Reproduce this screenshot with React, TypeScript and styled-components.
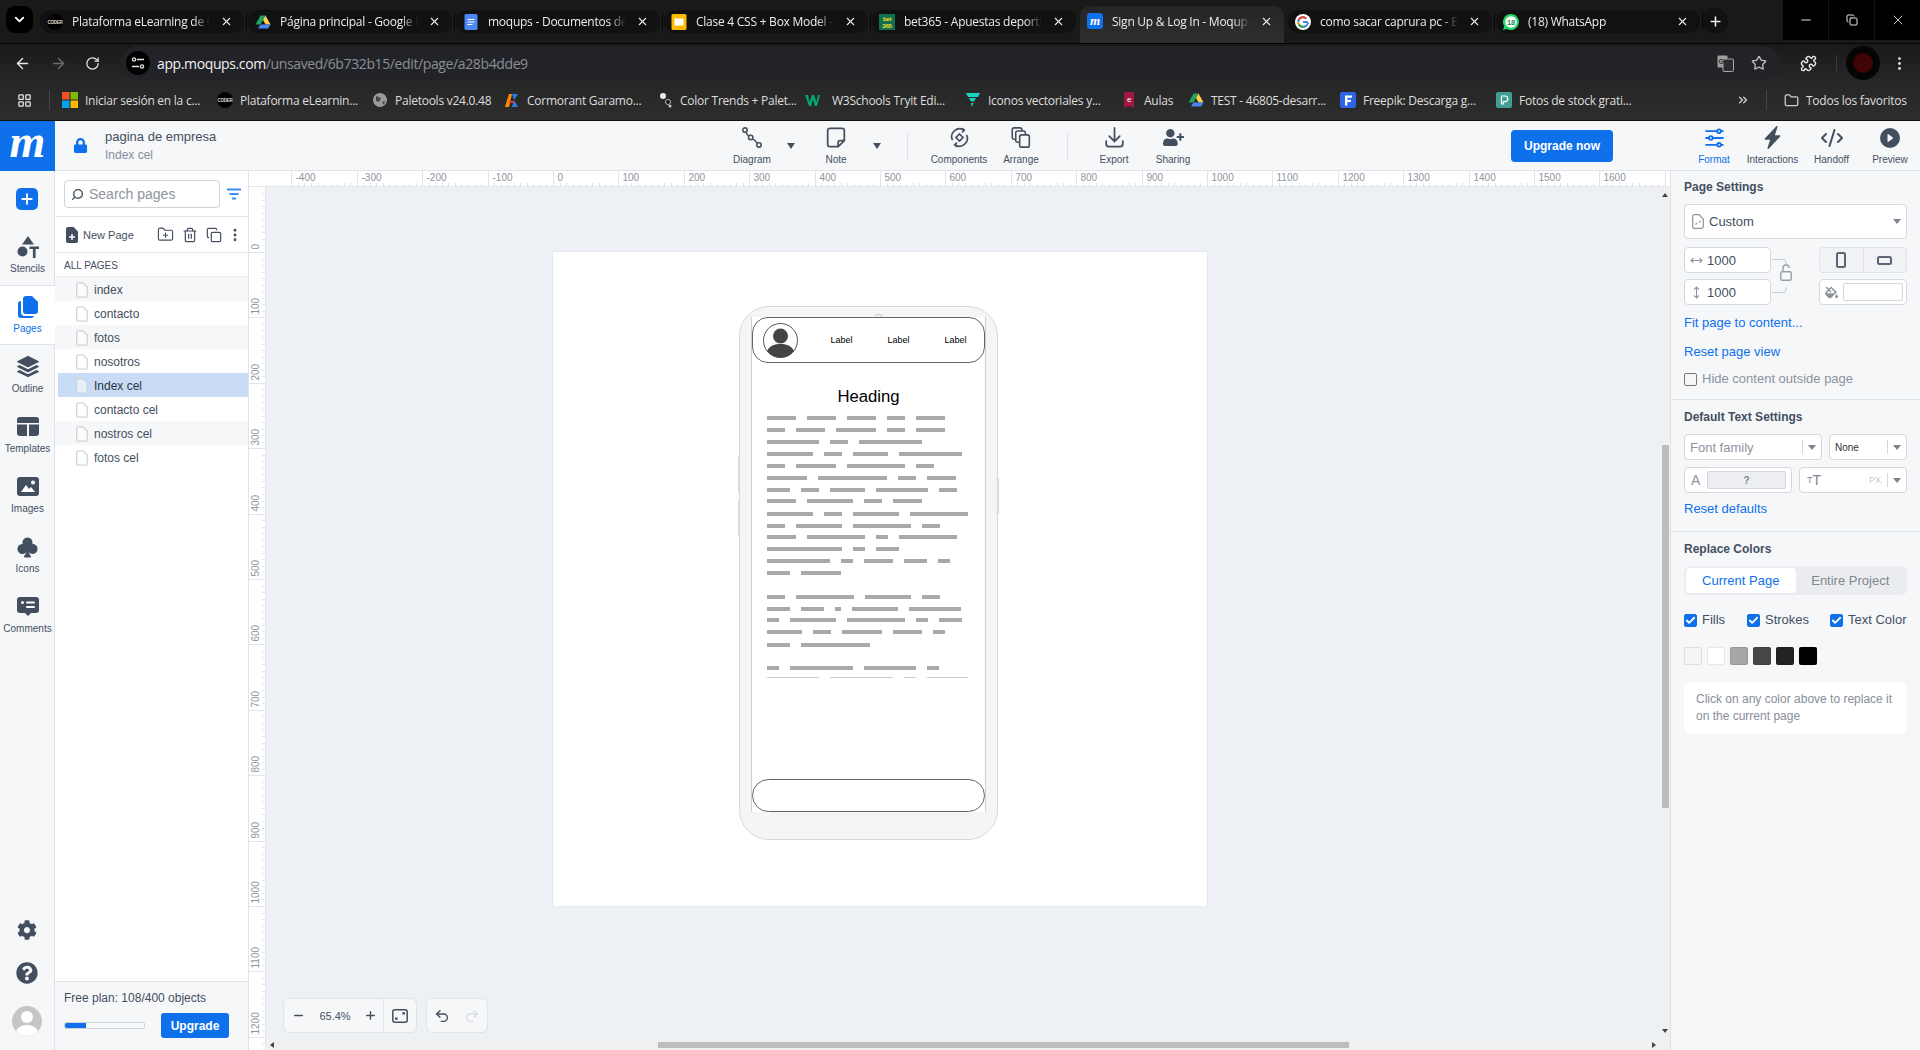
import React from 'react'
import styled, { createGlobalStyle } from 'styled-components'
import { FolderPlus, Trash2, Copy, EllipsisVertical, Minus, Plus, Undo2, Redo2, Search, ArrowLeft, ArrowRight, RotateCw, Star, Puzzle, LayoutGrid, Folder, ChevronDown, ChevronsRight, MoveHorizontal, MoveVertical, Check, X, CodeXml } from 'lucide-react'
import { FaLock, FaCog, FaQuestionCircle, FaUserPlus, FaFillDrip } from 'react-icons/fa'
import { BsStack, BsSuitClubFill, BsLightningChargeFill, BsPlayCircleFill } from 'react-icons/bs'

const BLUE = '#0e71eb'
const SLATE = '#434f5f'
const UI_FONT = '"Liberation Sans", Arial, sans-serif'
const CHROME_FONT = '"Open Sans", "Noto Sans", sans-serif'

const GlobalStyle = createGlobalStyle`
	html, body { margin: 0; padding: 0; height: 100%; overflow: hidden; }
	body { font-family: ${UI_FONT}; background: #fff; }
	* { box-sizing: border-box; }
`

const Page = styled.div`
	width: 1920px;
	height: 1050px;
	display: flex;
	flex-direction: column;
	overflow: hidden;
`

/* ---- browser chrome ---- */
const TabStrip = styled.div`
	height: 44px;
	background: #191919;
	border-bottom: 1px solid #050505;
	display: flex;
	align-items: flex-start;
	color: #ececec;
	font-family: ${CHROME_FONT};
`
const TabMenu = styled.div`
	width: 27px;
	height: 27px;
	margin: 6px 7px 0 6px;
	border-radius: 9px;
	background: #000;
	display: flex;
	align-items: center;
	justify-content: center;
	color: #fff;
`
const Tabs = styled.div`
	display: flex;
	gap: 4px;
`
const Tab = styled.div<{ $active?: boolean; $sep?: boolean }>`
	position: relative;
	width: 204px;
	height: ${(p) => (p.$active ? 37 : 23)}px;
	margin-top: ${(p) => (p.$active ? 6 : 10)}px;
	padding: ${(p) => (p.$active ? '0 0 7px 7px' : '0 0 0 7px')};
	border-radius: ${(p) => (p.$active ? '10px 10px 0 0' : '11px')};
	background: ${(p) => (p.$active ? 'linear-gradient(#252525, #2f2f2f)' : '#111')};
	display: flex;
	align-items: center;
	font-size: 12px;
	letter-spacing: -0.25px;
	&::after {
		content: '';
		display: ${(p) => (p.$sep ? 'block' : 'none')};
		position: absolute;
		right: -3px;
		top: 2px;
		width: 1px;
		height: 18px;
		background: #050505;
	}
`
const Favicon = styled.svg`
	width: 16px;
	height: 16px;
	flex: none;
	display: block;
`
const TabTitle = styled.span`
	width: 138px;
	margin: 0 8px 0 9px;
	white-space: nowrap;
	overflow: hidden;
	-webkit-mask-image: linear-gradient(90deg, #000 88%, transparent);
	mask-image: linear-gradient(90deg, #000 88%, transparent);
`
const TabClose = styled.span`
	width: 16px;
	display: flex;
	justify-content: center;
`
const NewTab = styled.div`
	width: 26px;
	height: 26px;
	margin: 8px 0 0 2px;
	border-radius: 50%;
	background: #111;
	display: flex;
	align-items: center;
	justify-content: center;
`
const WindowButtons = styled.div`
	margin-left: auto;
	width: 137px;
	height: 40px;
	background: #000;
	display: flex;
`
const WindowButton = styled.div<{ $line?: boolean }>`
	flex: 1;
	display: flex;
	align-items: center;
	justify-content: center;
	color: #e4e4e4;
	border-left: ${(p) => (p.$line ? '1px solid #141414' : '0')};
`
const NavBar = styled.div`
	height: 36px;
	background: linear-gradient(#191919, #262626);
	padding: 2px 0 0 0;
	display: flex;
	align-items: center;
`
const NavIcon = styled.div<{ $w: number; $dim?: boolean; $ml?: number }>`
	width: ${(p) => p.$w}px;
	margin-left: ${(p) => p.$ml ?? 0}px;
	flex: none;
	display: flex;
	justify-content: center;
	color: ${(p) => (p.$dim ? '#6d6d6d' : '#e6e6e6')};
`
const AddressBar = styled.div`
	width: 1659px;
	height: 34px;
	margin-left: 9px;
	border-radius: 17px;
	background: #212328;
	display: flex;
	align-items: center;
	padding-left: 5px;
	font: 14px ${CHROME_FONT};
	letter-spacing: -0.38px;
	color: #8c8f94;
`
const SiteBadge = styled.div`
	width: 24px;
	height: 24px;
	border-radius: 50%;
	background: #000;
	margin-right: 7px;
	display: flex;
	align-items: center;
	justify-content: center;
`
const Host = styled.span`
	color: #f2f2f2;
`
const AddressTools = styled.div`
	margin-left: auto;
	display: flex;
	gap: 17px;
	padding-right: 13px;
	color: #bdbdbd;
	align-items: center;
`
const NavDivider = styled.div`
	width: 1px;
	height: 16px;
	background: #3a3a3a;
	margin-left: 8px;
`
const ProfileDot = styled.div`
	width: 34px;
	height: 34px;
	border-radius: 50%;
	background: #050505;
	display: flex;
	align-items: center;
	justify-content: center;
	margin-left: 9px;
	&::after {
		content: '';
		width: 20px;
		height: 20px;
		border-radius: 50%;
		background: #3f0404;
	}
`
const BookmarkBar = styled.div`
	height: 41px;
	background: linear-gradient(#262626, #2d2d2d);
	border-bottom: 1px solid #111;
	display: flex;
	align-items: center;
	color: #dedede;
	font: 12px ${CHROME_FONT};
	letter-spacing: -0.25px;
`
const BarDivider = styled.div<{ $ml?: number }>`
	width: 1px;
	height: 20px;
	margin-left: ${(p) => p.$ml ?? 0}px;
	background: #454545;
	flex: none;
`
const BookmarkStart = styled.div`
	width: 12px;
	flex: none;
`
const Bookmark = styled.div<{ $ml?: number; $gap?: number }>`
	display: flex;
	align-items: center;
	gap: ${(p) => p.$gap ?? 7}px;
	flex: none;
	margin-left: ${(p) => p.$ml ?? 0}px;
	white-space: nowrap;
	overflow: hidden;
`
const BookmarkIcon = styled.svg`
	width: 16px;
	height: 16px;
	flex: none;
`

/* ---- moqups top bar ---- */
const AppBar = styled.div`
	height: 50px;
	flex: none;
	background: #f6f7f9;
	border-bottom: 1px solid #dfe2e8;
	display: flex;
	align-items: center;
	color: ${SLATE};
`
const Logo = styled.div`
	width: 55px;
	height: 50px;
	background: ${BLUE};
	display: flex;
	align-items: center;
	justify-content: center;
	color: #fff;
	font: italic 700 46px/46px "Liberation Serif", serif;
	padding-bottom: 8px;
`
const LockSlot = styled.div`
	width: 50px;
	display: flex;
	justify-content: center;
	color: ${BLUE};
`
const Project = styled.div`
	width: 617px;
	font-size: 13px;
	line-height: 19px;
`
const ProjectSub = styled.div`
	font-size: 12px;
	color: #868e99;
`
const Tool = styled.div<{ $w: number; $ml?: number }>`
	width: ${(p) => p.$w}px;
	margin-left: ${(p) => p.$ml ?? 0}px;
	height: 50px;
	flex: none;
	display: flex;
	flex-direction: column;
	align-items: center;
	padding-top: 4px;
	font-size: 10px;
	color: ${SLATE};
	white-space: nowrap;
`
const ToolLabel = styled.span<{ $blue?: boolean }>`
	margin-top: 3px;
	line-height: 12px;
	color: ${(p) => (p.$blue ? BLUE : 'inherit')};
`
const ToolIcon = styled.div`
	height: 26px;
	display: flex;
	align-items: center;
	justify-content: center;
`
const Caret = styled.div<{ $w: number; $mr?: number }>`
	width: ${(p) => p.$w}px;
	margin-right: ${(p) => p.$mr ?? 0}px;
	flex: none;
	display: flex;
	justify-content: center;
	&::after {
		content: '';
		border: 4px solid transparent;
		border-top: 6px solid ${SLATE};
		border-bottom: 0;
	}
`
const ToolDivider = styled.div<{ $mx: number }>`
	width: 1px;
	height: 28px;
	flex: none;
	margin: 0 ${(p) => p.$mx}px;
	background: #dfe2e8;
`
const UpgradeNow = styled.button`
	width: 102px;
	height: 32px;
	margin-left: 309px;
	flex: none;
	border: 0;
	border-radius: 4px;
	background: ${BLUE};
	color: #fff;
	font: 700 12px ${UI_FONT};
`

/* ---- workspace ---- */
const Workspace = styled.div`
	flex: 1;
	min-height: 0;
	display: flex;
`
const Rail = styled.div`
	width: 55px;
	flex: none;
	background: #f6f7f9;
	border-right: 1px solid #dfe2e8;
	display: flex;
	flex-direction: column;
	align-items: stretch;
	padding-top: 17px;
`
const AddButton = styled.div`
	width: 22px;
	height: 22px;
	margin: 0 0 15px 16px;
	border-radius: 5px;
	background: ${BLUE};
	display: flex;
	align-items: center;
	justify-content: center;
	color: #fff;
`
const RailItem = styled.div<{ $active?: boolean }>`
	height: 60px;
	width: 55px;
	flex: none;
	display: flex;
	flex-direction: column;
	align-items: center;
	padding-top: 10px;
	font-size: 10px;
	color: ${(p) => (p.$active ? BLUE : SLATE)};
	background: ${(p) => (p.$active ? '#fff' : 'transparent')};
	box-shadow: ${(p) => (p.$active ? 'inset 0 1px #dfe2e8, inset 0 -1px #dfe2e8' : 'none')};
`
const RailIcon = styled.div`
	height: 24px;
	display: flex;
	align-items: center;
	justify-content: center;
	margin-bottom: 4px;
`
const RailBottom = styled.div`
	margin-top: auto;
	display: flex;
	flex-direction: column;
	align-items: center;
	color: ${SLATE};
	padding-bottom: 14px;
	gap: 22px;
`
const Avatar = styled.div`
	width: 30px;
	height: 30px;
	border-radius: 50%;
	background: #c6c6c6;
	overflow: hidden;
`

const PagesPanel = styled.div`
	width: 194px;
	flex: none;
	display: flex;
	flex-direction: column;
	background: #fff;
	border-right: 1px solid #dfe2e8;
	color: ${SLATE};
`
const SearchRow = styled.div`
	height: 46px;
	flex: none;
	padding: 9px 0 0 9px;
	border-bottom: 1px solid #e4e6ea;
	display: flex;
	align-items: flex-start;
`
const SearchBox = styled.div`
	width: 156px;
	height: 28px;
	border: 1px solid #ced2d8;
	border-radius: 4px;
	display: flex;
	align-items: center;
	gap: 5px;
	padding-left: 6px;
	font-size: 14px;
	color: #8d949e;
	svg {
		color: ${SLATE};
		transform: scaleX(-1);
	}
`
const FilterIcon = styled.svg`
	width: 14px;
	height: 12px;
	margin: 8px 0 0 7px;
`
const ActionRow = styled.div`
	height: 36px;
	flex: none;
	padding-left: 11px;
	border-bottom: 1px solid #e4e6ea;
	display: flex;
	align-items: center;
	gap: 5px;
	font-size: 11px;
`
const ActionIcons = styled.div`
	margin-left: 18px;
	display: flex;
	gap: 8px;
	align-items: center;
	svg:last-child {
		margin-left: -3px;
	}
`
const AllPages = styled.div`
	height: 24px;
	flex: none;
	padding: 1px 0 0 9px;
	display: flex;
	align-items: center;
	font-size: 10px;
	border-bottom: 1px solid #eceef1;
`
const PageRow = styled.div<{ $selected?: boolean; $odd?: boolean }>`
	height: 24px;
	flex: none;
	display: flex;
	align-items: center;
	gap: 6px;
	font-size: 12px;
	padding-top: 1px;
	margin-left: ${(p) => (p.$selected ? 3 : 0)}px;
	padding-left: ${(p) => (p.$selected ? 18 : 21)}px;
	background: ${(p) => (p.$selected ? '#c9dcf5' : p.$odd ? '#f6f7f9' : '#fff')};
	color: ${(p) => (p.$selected ? '#2a3340' : SLATE)};
`
const PlanBox = styled.div`
	margin-top: auto;
	height: 69px;
	flex: none;
	background: #f6f7f9;
	border-top: 1px solid #dfe2e8;
	padding: 9px 0 0 9px;
	font-size: 12px;
`
const PlanRow = styled.div`
	display: flex;
	align-items: center;
	margin-top: 8px;
`
const PlanTrack = styled.div`
	width: 81px;
	height: 7px;
	border: 1px solid #cfd3d9;
	border-radius: 2px;
	background: #f6f7f9;
`
const PlanFill = styled.div`
	height: 100%;
	background: ${BLUE};
	border-radius: 2px 0 0 2px;
`
const UpgradeSmall = styled.button`
	width: 68px;
	height: 25px;
	margin-left: 16px;
	border: 0;
	border-radius: 3px;
	background: ${BLUE};
	color: #fff;
	font: 700 12px ${UI_FONT};
`

const CanvasArea = styled.div`
	flex: 1;
	min-width: 0;
	display: grid;
	grid-template-columns: 17px 1fr 10px;
	grid-template-rows: 16px 1fr 10px;
	background: #f0f0f0;
`
const RulerCorner = styled.div`
	background: #fff;
	border-bottom: 1px solid #e4e6ea;
`
const RulerSvg = styled.svg`
	display: block;
	background: #fff;
	font: 10px ${UI_FONT};
`
const TopRuler = styled.div`
	grid-column: 2 / 4;
	overflow: hidden;
`
const SideRuler = styled.div`
	grid-row: 2 / 4;
	overflow: hidden;
`
const Stage = styled.div`
	position: relative;
	overflow: hidden;
	background: #edf0f5;
	padding: 65px 0 0 287px;
`
const Artboard = styled.div`
	position: relative;
	width: 654px;
	height: 654px;
	background: #fff;
	box-shadow: 0 0 0 1px #e6e8ec;
`
const ScrollV = styled.div`
	background: #f0f0f0;
	display: flex;
	flex-direction: column;
	align-items: center;
	padding: 6px 0 7px;
`
const ThumbV = styled.div`
	width: 7px;
	height: 363px;
	margin-top: 248px;
	background: #bdbdbd;
`
const ArrowV = styled.div<{ $down?: boolean }>`
	flex: none;
	margin-top: ${(p) => (p.$down ? 'auto' : 0)};
	border: 3px solid transparent;
	border-bottom: ${(p) => (p.$down ? '0' : '4px solid #444')};
	border-top: ${(p) => (p.$down ? '4px solid #444' : '0')};
`
const ScrollH = styled.div`
	background: #f0f0f0;
	grid-column: 2 / 4;
	display: flex;
	align-items: center;
	padding: 0 14px 0 4px;
`
const ThumbH = styled.div`
	width: 691px;
	height: 6px;
	margin-left: 384px;
	background: #bdbdbd;
`
const ArrowH = styled.div<{ $right?: boolean }>`
	flex: none;
	margin-left: ${(p) => (p.$right ? 'auto' : 0)};
	border: 3px solid transparent;
	border-right: ${(p) => (p.$right ? '0' : '4px solid #444')};
	border-left: ${(p) => (p.$right ? '4px solid #444' : '0')};
`
const ZoomDock = styled.div`
	position: absolute;
	left: 17px;
	bottom: 7px;
	display: flex;
	gap: 9px;
`
const DockBox = styled.div`
	height: 35px;
	background: #f6f7f9;
	border: 1px solid #e0e3e8;
	border-radius: 6px;
	display: flex;
	align-items: center;
	color: ${SLATE};
	font-size: 11px;
`
const DockSlot = styled.div<{ $w: number; $line?: boolean; $dim?: boolean }>`
	width: ${(p) => p.$w}px;
	height: 100%;
	display: flex;
	align-items: center;
	justify-content: center;
	border-left: ${(p) => (p.$line ? '1px solid #e0e3e8' : '0')};
	color: ${(p) => (p.$dim ? '#d9dde2' : 'inherit')};
`

/* ---- phone wireframe on the artboard ---- */
const Phone = styled.div`
	position: absolute;
	left: 186px;
	top: 54px;
	width: 259px;
	height: 534px;
	padding: 10px 11px 27px 11px;
	background: #f5f5f5;
	border: 1px solid #d8d8d8;
	border-radius: 30px;
	display: flex;
`
const PhoneButton = styled.div<{ $side: 'left' | 'right'; $top: number; $h: number }>`
	position: absolute;
	${(p) => p.$side}: -2px;
	top: ${(p) => p.$top}px;
	width: 1px;
	height: ${(p) => p.$h}px;
	background: #dcdcdc;
`
const Notch = styled.div`
	position: absolute;
	left: 135px;
	top: 7px;
	width: 7px;
	height: 3px;
	border: 1px solid #ccc;
	border-bottom: 0;
	border-radius: 4px 4px 0 0;
`
const Screen = styled.div`
	flex: 1;
	min-width: 0;
	background: #fff;
	border-left: 1px solid #cfcfcf;
	border-right: 1px solid #cfcfcf;
	display: flex;
	flex-direction: column;
	color: #000;
`
const PhoneNav = styled.div`
	height: 46px;
	flex: none;
	border: 1px solid #666;
	border-radius: 16px;
	display: flex;
	align-items: center;
	padding-left: 10px;
	font: 9px "Liberation Sans", sans-serif;
`
const PhoneAvatar = styled.svg`
	width: 35px;
	height: 35px;
	margin-right: 15px;
`
const NavLabel = styled.span`
	width: 57px;
	text-align: center;
`
const Heading = styled.div`
	margin-top: 23px;
	text-align: center;
	font: 16.7px/22px "Liberation Sans", sans-serif;
`
const Lorem = styled.div`
	margin-top: 8px;
	padding-left: 15px;
`
const LoremRow = styled.div<{ $thin?: boolean }>`
	display: flex;
	height: ${(p) => (p.$thin ? 1 : 4)}px;
	gap: 11px;
	opacity: ${(p) => (p.$thin ? 0.6 : 1)};
`
const LoremWord = styled.div`
	height: 100%;
	background: #a9a9a9;
`
const PhoneFooter = styled.div`
	margin-top: auto;
	height: 33px;
	flex: none;
	border: 1px solid #666;
	border-radius: 17px;
	background: #fff;
`

/* ---- right panel ---- */
const RightPanel = styled.div`
	width: 250px;
	flex: none;
	background: #f6f7f9;
	border-left: 1px solid #dfe2e8;
	color: ${SLATE};
	font-size: 13px;
`
const Section = styled.div<{ $h?: number; $pt: number }>`
	height: ${(p) => (p.$h ? `${p.$h}px` : 'auto')};
	padding: ${(p) => p.$pt}px 13px 0 13px;
	border-bottom: ${(p) => (p.$h ? '1px solid #dfe2e8' : '0')};
	display: flex;
	flex-direction: column;
`
const SectionTitle = styled.div`
	font-weight: 700;
	font-size: 12px;
	line-height: 16px;
	margin-bottom: 9px;
`
const Field = styled.div<{ $w?: number; $h?: number; $muted?: boolean; $tight?: boolean }>`
	width: ${(p) => (p.$w ? `${p.$w}px` : '100%')};
	height: ${(p) => p.$h ?? 26}px;
	flex: none;
	background: #fff;
	border: 1px solid #d5d8de;
	border-radius: 4px;
	display: flex;
	align-items: center;
	padding: ${(p) => (p.$tight ? '0 3px 0 5px' : '0 5px')};
	color: ${(p) => (p.$muted ? '#8d949e' : SLATE)};
`
const InnerField = styled.div<{ $w: number; $grey?: boolean }>`
	width: ${(p) => p.$w}px;
	height: 18px;
	margin-left: auto;
	background: ${(p) => (p.$grey ? '#eceef1' : '#fff')};
	border: 1px solid #d5d8de;
	border-radius: 2px;
	display: flex;
	align-items: center;
	justify-content: center;
	font-size: 10px;
	font-weight: 700;
	color: #7d8490;
`
const FieldRow = styled.div<{ $mt?: number }>`
	display: flex;
	margin-top: ${(p) => p.$mt ?? 7}px;
	justify-content: space-between;
`
const FieldStack = styled.div`
	display: flex;
	flex-direction: column;
	gap: 6px;
`
const SizeValue = styled.span`
	margin-left: 4px;
`
const Linker = styled.svg`
	width: 47px;
	height: 58px;
	flex: none;
`
const Segments = styled.div`
	width: 88px;
	height: 26px;
	background: #f1f2f5;
	border: 1px solid #e0e3e8;
	border-radius: 4px;
	display: flex;
`
const Segment = styled.div<{ $line?: boolean }>`
	flex: 1;
	display: flex;
	align-items: center;
	justify-content: center;
	border-left: ${(p) => (p.$line ? '1px solid #e0e3e8' : '0')};
`
const Orient = styled.div<{ $w: number; $h: number }>`
	width: ${(p) => p.$w}px;
	height: ${(p) => p.$h}px;
	border: 2px solid #5a6675;
	border-radius: 2.5px;
`
const CustomIcon = styled.svg`
	width: 12px;
	height: 15px;
	margin: 0 5px 0 2px;
	flex: none;
`
const Swatch = styled.div<{ $color: string }>`
	width: 18px;
	height: 18px;
	border-radius: 2px;
	border: 1px solid rgba(0, 0, 0, 0.09);
	background: ${(p) => p.$color};
`
const Swatches = styled.div`
	display: flex;
	gap: 5px;
	margin-top: 19px;
`
const TextLink = styled.div<{ $mt: number }>`
	color: ${BLUE};
	margin-top: ${(p) => p.$mt}px;
	line-height: 16px;
`
const CheckLine = styled.label`
	display: flex;
	align-items: center;
	gap: 5px;
	margin-top: 11px;
	color: #8c929c;
	line-height: 16px;
`
const Box = styled.span<{ $on?: boolean }>`
	width: 13px;
	height: 13px;
	flex: none;
	border-radius: 2px;
	border: 1px solid ${(p) => (p.$on ? BLUE : '#777')};
	background: ${(p) => (p.$on ? BLUE : 'transparent')};
	color: #fff;
	display: flex;
	align-items: center;
	justify-content: center;
`
const Dropper = styled.span<{ $sep?: boolean }>`
	margin-left: auto;
	height: 14px;
	display: flex;
	align-items: center;
	gap: 6px;
	color: #8b919b;
	&::after {
		content: '';
		margin-left: ${(p) => (p.$sep ? 5 : 0)}px;
		border: 4px solid transparent;
		border-top: 5px solid #7d8490;
		border-bottom: 0;
	}
`
const DropLine = styled.i`
	width: 1px;
	height: 14px;
	background: #d5d8de;
	margin-right: -6px;
`
const UnitPx = styled.span`
	font-size: 9px;
	color: #c4c8ce;
`
const NoneText = styled.span`
	font-size: 10px;
	color: #333;
`
const ColorA = styled.span`
	margin-left: 1px;
	font-size: 14px;
	color: #8d949e;
`
const SizeSmall = styled.span`
	margin-left: 2px;
	font-size: 9px;
	color: #7d8490;
`
const SizeBig = styled.span`
	font-size: 14px;
	color: #7d8490;
`
const SwitchTabs = styled.div`
	height: 29px;
	background: #ebecf0;
	border-radius: 6px;
	padding: 2px;
	display: flex;
`
const SwitchTab = styled.div<{ $on?: boolean }>`
	flex: 1;
	padding-bottom: 1px;
	border-radius: 4px;
	display: flex;
	align-items: center;
	justify-content: center;
	background: ${(p) => (p.$on ? '#fff' : 'transparent')};
	color: ${(p) => (p.$on ? BLUE : '#7f8691')};
`
const ChecksRow = styled.div`
	display: flex;
	margin-top: 17px;
	line-height: 16px;
`
const CheckItem = styled.div<{ $w: number }>`
	width: ${(p) => p.$w}px;
	display: flex;
	align-items: center;
	gap: 5px;
	white-space: nowrap;
`
const InfoBox = styled.div`
	margin-top: 17px;
	height: 52px;
	background: #fff;
	border-radius: 8px;
	padding: 9px 12px 0;
	font-size: 12px;
	line-height: 17px;
	color: #868e99;
`

/* ---- drawings ---- */
const DocIcon = () => (
	<svg width="12" height="16" viewBox="0 0 12 16" fill="none" stroke="#cfd3d9" strokeWidth="1.3">
		<path d="M2 .8h5l4.2 4.2v8.6a1.6 1.6 0 0 1-1.6 1.6H2A1.4 1.4 0 0 1 .7 13.6V2.2A1.4 1.4 0 0 1 2 .8z" fill="#fff" fillOpacity="0.55" />
	</svg>
)
const StencilsIcon = () => (
	<svg width="24" height="24" viewBox="0 0 24 24" fill={SLATE}>
		<path d="M12 1l6 8.5H6z" />
		<circle cx="6.5" cy="16.5" r="5" />
		<path d="M13.5 11.5h9.5v2.5h-3.4v9h-2.7v-9h-3.4z" />
	</svg>
)
const PagesIcon = () => (
	<svg width="22" height="24" viewBox="0 0 22 24" fill={BLUE}>
		<path d="M9 1h6l6 6v9a3 3 0 0 1-3 3H9a3 3 0 0 1-3-3V4a3 3 0 0 1 3-3z" />
		<path d="M4 6v11a4 4 0 0 0 4 4h9a3 3 0 0 1-3 2H4a3 3 0 0 1-3-3V9a3 3 0 0 1 3-3z" />
	</svg>
)
const TemplatesIcon = () => (
	<svg width="22" height="20" viewBox="0 0 22 20" fill={SLATE}>
		<path d="M3 0h16a3 3 0 0 1 3 3v3H0V3a3 3 0 0 1 3-3z" />
		<path d="M0 7.5h10V19H3a3 3 0 0 1-3-3z" />
		<path d="M12 7.5h10V16a3 3 0 0 1-3 3h-7z" />
	</svg>
)
const ImagesIcon = () => (
	<svg width="22" height="20" viewBox="0 0 22 20">
		<rect width="22" height="19" rx="3" fill={SLATE} />
		<path d="M4 15l5-7 3 4 2-2 4 5z" fill="#fff" />
		<circle cx="16" cy="5.5" r="2" fill="#fff" />
	</svg>
)
const CommentsIcon = () => (
	<svg width="22" height="20" viewBox="0 0 22 20">
		<path d="M3 0h16a3 3 0 0 1 3 3v10a3 3 0 0 1-3 3h-5l-3 3-3-3H3a3 3 0 0 1-3-3V3a3 3 0 0 1 3-3z" fill={SLATE} />
		<circle cx="5.5" cy="5.5" r="1.5" fill="#fff" />
		<rect x="9" y="4.5" width="9" height="2" rx="1" fill="#fff" />
		<rect x="9" y="9" width="9" height="2" rx="1" fill="#fff" />
	</svg>
)
const DiagramIcon = () => (
	<svg width="22" height="21" viewBox="0 0 24 24" fill="none" stroke={SLATE} strokeWidth="1.8">
		<circle cx="4" cy="3.5" r="2.5" />
		<circle cx="10.5" cy="12" r="2.5" />
		<circle cx="20" cy="20.5" r="2.5" />
		<path d="M5.2 5.800c.5 2 1.600 3.300 3.400 4.600M12.500 13.600c2.200 1 4 2.200 5.600 5" />
	</svg>
)
const NoteIcon = () => (
	<svg width="20" height="21" viewBox="0 0 22 24" fill="none" stroke={SLATE} strokeWidth="2">
		<path d="M4 1.5h14a2.5 2.5 0 0 1 2.5 2.5v11.5l-7 7H4A2.5 2.5 0 0 1 1.5 20V4A2.5 2.5 0 0 1 4 1.5z" />
		<path d="M13.5 22.5v-5a2 2 0 0 1 2-2h5" />
	</svg>
)
const ComponentsIcon = () => (
	<svg width="21" height="21" viewBox="0 0 24 24" fill="none" stroke={SLATE} strokeWidth="1.9">
		<path d="M4 15a9 9 0 0 1 13-11.500M20 9a9 9 0 0 1-13 11.500" />
		<path d="M14.500 1.500l3 2-2.500 2.600M9.500 22.500l-3-2 2.500-2.600" />
		<path d="M12 8l4 4-4 4-4-4z" />
	</svg>
)
const ArrangeIcon = () => (
	<svg width="20" height="21" viewBox="0 0 22 24" fill="none" stroke={SLATE} strokeWidth="1.8">
		<rect x="1" y="1" width="11" height="13" rx="2" />
		<rect x="5" y="4.5" width="11" height="13" rx="2" fill="#f6f7f9" />
		<rect x="9.5" y="9" width="11" height="14" rx="2" fill="#f6f7f9" />
	</svg>
)
const ExportIcon = () => (
	<svg width="21" height="21" viewBox="0 0 22 24" fill="none" stroke={SLATE} strokeWidth="2" strokeLinecap="round">
		<path d="M11 1v15M5 10.500l6 6 6-6" />
		<path d="M1.500 16v3.500a3 3 0 0 0 3 3h13a3 3 0 0 0 3-3V16" />
	</svg>
)
const FormatIcon = () => (
	<svg width="21" height="20" viewBox="0 0 22 22" fill="none" stroke={BLUE} strokeWidth="2">
		<path d="M1 3.500h13M18 3.500h3M1 11h4M9 11h12M1 18.500h13M18 18.500h3" />
		<circle cx="16" cy="3.5" r="2" />
		<circle cx="7" cy="11" r="2" />
		<circle cx="16" cy="18.5" r="2" />
	</svg>
)
const NewPageIcon = () => (
	<svg width="12" height="16" viewBox="0 0 12 16">
		<path d="M2 0h5.500L12 4.500V14a2 2 0 0 1-2 2H2a2 2 0 0 1-2-2V2a2 2 0 0 1 2-2z" fill={SLATE} />
		<path d="M6 7v6M3 10h6" stroke="#fff" strokeWidth="1.5" />
	</svg>
)
const FitIcon = () => (
	<svg width="16" height="14" viewBox="0 0 16 14" fill="none" stroke={SLATE} strokeWidth="1.5">
		<rect x="0.8" y="0.8" width="14.4" height="12.4" rx="2" />
		<path d="M3.500 10.500l2-2M3.500 10.500h2M3.500 10.500v-2M12.500 3.500l-2 2M12.500 3.500h-2M12.500 3.500v2" strokeWidth="1.1" />
	</svg>
)
const TuneIcon = () => (
	<svg width="14" height="14" viewBox="0 0 14 14" fill="none" stroke="#e6e6e6" strokeWidth="1.3">
		<circle cx="3" cy="3.5" r="1.6" />
		<path d="M6 3.500h7M1 10.500h7" />
		<circle cx="11" cy="10.5" r="1.6" />
	</svg>
)
const TranslateIcon = () => (
	<svg width="17" height="17" viewBox="0 0 17 17">
		<rect x="0.5" y="0.5" width="10" height="12" rx="1" fill="#9d9d9d" />
		<rect x="6" y="4" width="10.5" height="12.5" rx="1" fill="#2b2d31" stroke="#a9a9a9" />
		<text x="1.500" y="9" fontSize="7" fontWeight="700" fill="#333" fontFamily="Liberation Sans">G</text>
	</svg>
)

const MARKS: Record<string, React.ReactNode> = {
	ms: (
		<>
			<rect width="7.5" height="7.5" fill="#f25022" />
			<rect x="8.5" width="7.5" height="7.5" fill="#7fba00" />
			<rect y="8.5" width="7.5" height="7.5" fill="#00a4ef" />
			<rect x="8.5" y="8.5" width="7.5" height="7.5" fill="#ffb900" />
		</>
	),
	coder: (
		<>
			<circle cx="8" cy="8" r="8" fill="#000" />
			<text x="8" y="10" textAnchor="middle" fontSize="4.5" fontWeight="700" fill="#ddd" fontFamily="Liberation Sans">CODER</text>
		</>
	),
	pale: (
		<>
			<circle cx="8" cy="8" r="7" fill="#9a9a9a" />
			<path d="M4 4l5 2-2 4-3-1zM10 10l3-1-1 4z" fill="#444" />
		</>
	),
	cormorant: (
		<>
			<path d="M1 15L5 2h3L5 15z" fill="#ff8a00" />
			<path d="M8 2h6l-4 6 4 7H8l2-7z" fill="#2b7de9" />
			<path d="M5 9h5v2H5z" fill="#e9352b" />
		</>
	),
	color: (
		<>
			<circle cx="6" cy="4" r="3" fill="#eee" />
			<circle cx="11" cy="10" r="2.5" fill="#111" stroke="#bbb" />
			<circle cx="13" cy="14" r="1.5" fill="#ccc" />
		</>
	),
	w3: <path d="M0 3h3l1.500 7L7 3h2l2.500 7L13 3h2l-3 11h-2L8 7.500 6 14H4z" fill="#04aa6d" />,
	flat: (
		<>
			<path d="M1 1h14l-2 4H3z" fill="#1dd3c0" />
			<path d="M4 6h7l-2 3.500H6zM6 11h2.500L7 15z" fill="#1dd3c0" />
		</>
	),
	aulas: (
		<>
			<path d="M3 0h10v16l-5-2-5 2z" fill="#a0173f" />
			<text x="8" y="10" fontSize="8" fill="#fff" textAnchor="middle" fontFamily="Liberation Sans">e</text>
		</>
	),
	drive: (
		<>
			<path d="M5.500 1.500h5L8 6 5.500 10.500H0.500z" fill="#1fa463" />
			<path d="M10.500 1.500l5 9h-5L8 6z" fill="#ffd04b" />
			<path d="M3 14.500l2.500-4h10l-2.500 4z" fill="#4688f4" />
		</>
	),
	freepik: (
		<>
			<rect width="16" height="16" rx="2" fill="#2d65e6" />
			<path d="M5 3.500h7v2.200H7.400v2H11v2.200H7.400v3.500H5z" fill="#fff" />
		</>
	),
	pexels: (
		<>
			<rect width="16" height="16" rx="2" fill="#3f9f91" />
			<path d="M5.500 4H9a2.800 2.800 0 0 1 0 5.600H7.500V12h-2z" fill="none" stroke="#fff" strokeWidth="1.2" />
		</>
	),
	docs: (
		<>
			<rect x="1.5" width="13" height="16" rx="1.5" fill="#4b87f5" />
			<path d="M4.500 5.500h7M4.500 8h7M4.500 10.500h5" stroke="#fff" strokeWidth="1.2" />
		</>
	),
	slides: (
		<>
			<rect x="0.5" y="0" width="15" height="16" rx="1.5" fill="#fbbc04" />
			<rect x="3.5" y="4.5" width="9" height="7" fill="#fff" />
		</>
	),
	bet: (
		<>
			<rect width="16" height="16" fill="#126e51" />
			<text x="8" y="7" textAnchor="middle" fontSize="6" fontWeight="700" fill="#ffdf1b" fontFamily="Liberation Sans">bet</text>
			<text x="8" y="14" textAnchor="middle" fontSize="6" fontWeight="700" fill="#ffdf1b" fontFamily="Liberation Sans">365</text>
		</>
	),
	moqups: (
		<>
			<rect width="16" height="16" rx="3" fill={BLUE} />
			<text x="8" y="12" textAnchor="middle" fill="#fff" fontSize="13" fontStyle="italic" fontWeight="700" fontFamily="Liberation Serif">m</text>
		</>
	),
	google: (
		<>
			<circle cx="8" cy="8" r="8" fill="#fff" />
			<path d="M12.800 8.200c0 2.700-2 4.600-4.800 4.600A4.800 4.800 0 1 1 11.300 4.500" fill="none" stroke="#4285f4" strokeWidth="2" />
			<path d="M8 8h4.800" stroke="#4285f4" strokeWidth="2" />
			<path d="M3.600 6A4.800 4.800 0 0 1 11.300 4.500" fill="none" stroke="#ea4335" strokeWidth="2" />
			<path d="M3.200 8c0 1 .2 1.900.6 2.600" fill="none" stroke="#fbbc05" strokeWidth="2" />
			<path d="M3.800 10.600A4.800 4.800 0 0 0 10.500 12" fill="none" stroke="#34a853" strokeWidth="2" />
		</>
	),
	whatsapp: (
		<>
			<path d="M8 0a8 8 0 0 0-6.800 12.200L0 16l3.900-1.100A8 8 0 1 0 8 0z" fill="#25d366" />
			<circle cx="8" cy="8" r="5.8" fill="#fff" />
			<text x="8" y="10.5" textAnchor="middle" fill="#128c4a" fontSize="7.5" fontWeight="700" fontFamily="Liberation Sans">18</text>
		</>
	),
}

/* bookmark data: width is the slot up to the next bookmark's icon */
const BOOKMARKS = [
	{ mark: 'ms', label: 'Iniciar sesión en la c...', w: 155 },
	{ mark: 'coder', label: 'Plataforma eLearnin...', w: 155 },
	{ mark: 'pale', label: 'Paletools v24.0.48', w: 132 },
	{ mark: 'cormorant', label: 'Cormorant Garamo...', w: 153 },
	{ mark: 'color', label: 'Color Trends + Palet...', w: 148 },
	{ mark: 'w3', label: 'W3Schools Tryit Edi...', w: 160, gap: 11 },
	{ mark: 'flat', label: 'Iconos vectoriales y...', w: 156 },
	{ mark: 'aulas', label: 'Aulas', w: 67 },
	{ mark: 'drive', label: 'TEST - 46805-desarr...', w: 152 },
	{ mark: 'freepik', label: 'Freepik: Descarga g...', w: 156 },
	{ mark: 'pexels', label: 'Fotos de stock grati...', w: 140 },
]

const TABS = [
	{ kind: 'coder', title: 'Plataforma eLearning de Coderhouse', sep: true },
	{ kind: 'drive', title: 'Página principal - Google Drive', sep: true },
	{ kind: 'docs', title: 'moqups - Documentos de Google', sep: true },
	{ kind: 'slides', title: 'Clase 4 CSS + Box Model - Presentaciones', sep: true },
	{ kind: 'bet', title: 'bet365 - Apuestas deportivas online' },
	{ kind: 'moqups', title: 'Sign Up & Log In - Moqups App', active: true },
	{ kind: 'google', title: 'como sacar caprura pc - Buscar con Google', sep: true },
	{ kind: 'whatsapp', title: '(18) WhatsApp', sep: true },
]

const PAGES = ['index', 'contacto', 'fotos', 'nosotros', 'Index cel', 'contacto cel', 'nostros cel', 'fotos cel']

// [distance from the previous row's top, word widths in px]
const LOREM: [number, number[]][] = [
	[0, [29, 29, 29, 18, 29]],
	[12, [18, 29, 40, 18, 29]],
	[12, [52, 18, 63]],
	[12, [46, 18, 35, 63]],
	[12, [18, 40, 58, 18]],
	[12, [40, 69, 18, 29]],
	[12, [23, 18, 35, 52, 18]],
	[11, [29, 46, 18, 29]],
	[13, [46, 18, 46, 58]],
	[12, [18, 46, 58, 18]],
	[11, [29, 58, 12, 58]],
	[12, [75, 12, 23]],
	[12, [63, 12, 29, 23, 12]],
	[12, [23, 40]],
	[24, [18, 58, 46, 18]],
	[12, [23, 23, 6, 46, 52]],
	[11, [12, 46, 58, 12, 23]],
	[12, [35, 18, 40, 29, 12]],
	[13, [23, 69]],
	[23, [12, 63, 52, 12]],
]
const LOREM_CLIPPED = [52, 63, 12, 41]

const HorizontalRuler = () => {
	const width = 1411
	const origin = 287
	const step = 65.4
	const marks: React.ReactNode[] = []
	for (let u = -40; u <= 170; u++) {
		const x = Math.round(origin + u * step * 0.1) + 0.5
		if (x < 0 || x > width) continue
		if (u % 10 === 0) {
			marks.push(<path key={u} d={`M${x} 0V16`} stroke="#e2e4e9" />)
			marks.push(
				<text key={`t${u}`} x={x + 4} y={10} fill="#8e949d">
					{u * 10}
				</text>,
			)
		} else {
			marks.push(<path key={u} d={`M${x} 12V16`} stroke="#e2e4e9" />)
		}
	}
	return (
		<RulerSvg width={width} height={16}>
			{marks}
			<path d={`M0 15.5H${width}`} stroke="#e4e6ea" />
		</RulerSvg>
	)
}

const VerticalRuler = () => {
	const height = 863
	const origin = 65
	const step = 65.4
	const marks: React.ReactNode[] = []
	for (let u = -9; u <= 126; u++) {
		const y = Math.round(origin + u * step * 0.1) + 0.5
		if (u % 10 === 0) {
			marks.push(<path key={u} d={`M0 ${y}H17`} stroke="#e2e4e9" />)
			marks.push(
				<text key={`t${u}`} transform={`translate(10 ${y - 3}) rotate(-90)`} fill="#8e949d">
					{u * 10}
				</text>,
			)
		} else {
			marks.push(<path key={u} d={`M13 ${y}H17`} stroke="#e2e4e9" />)
		}
	}
	return (
		<RulerSvg width={17} height={height}>
			{marks}
			<path d={`M16.5 0V${height}`} stroke="#e4e6ea" />
		</RulerSvg>
	)
}

export default function App() {
	return (
		<Page>
			<GlobalStyle />

			<TabStrip>
				<TabMenu><ChevronDown size={15} strokeWidth={3} /></TabMenu>
				<Tabs>
					{TABS.map((tab) => (
						<Tab key={tab.kind} $active={tab.active} $sep={tab.sep}>
							<Favicon viewBox="0 0 16 16">{MARKS[tab.kind]}</Favicon>
							<TabTitle>{tab.title}</TabTitle>
							<TabClose><X size={13} strokeWidth={2} /></TabClose>
						</Tab>
					))}
				</Tabs>
				<NewTab><Plus size={15} strokeWidth={2.5} /></NewTab>
				<WindowButtons>
					<WindowButton><Minus size={14} /></WindowButton>
					<WindowButton $line><Copy size={12} /></WindowButton>
					<WindowButton $line><X size={16} strokeWidth={1.2} /></WindowButton>
				</WindowButtons>
			</TabStrip>

			<NavBar>
				<NavIcon $w={44}><ArrowLeft size={17} /></NavIcon>
				<NavIcon $w={28} $dim><ArrowRight size={17} /></NavIcon>
				<NavIcon $w={40}><RotateCw size={15} /></NavIcon>
				<AddressBar>
					<SiteBadge><TuneIcon /></SiteBadge>
					<Host>app.moqups.com</Host>/unsaved/6b732b15/edit/page/a28b4dde9
					<AddressTools>
						<TranslateIcon />
						<Star size={16} />
					</AddressTools>
				</AddressBar>
				<NavIcon $w={40} $ml={8}><Puzzle size={17} /></NavIcon>
				<NavDivider />
				<ProfileDot />
				<NavIcon $w={30} $ml={4}><EllipsisVertical size={17} /></NavIcon>
			</NavBar>

			<BookmarkBar>
				<NavIcon $w={49}><LayoutGrid size={15} /></NavIcon>
				<BarDivider />
				<BookmarkStart />
				{BOOKMARKS.map((b) => (
					<Bookmark key={b.label} $gap={b.gap} style={{ width: b.w }}>
						<BookmarkIcon viewBox="0 0 16 16">{MARKS[b.mark]}</BookmarkIcon>
						{b.label}
					</Bookmark>
				))}
				<NavIcon $w={40} $ml={87}><ChevronsRight size={14} /></NavIcon>
				<BarDivider $ml={3} />
				<Bookmark $ml={17}>
					<Folder size={15} color="#cfcfcf" />
					Todos los favoritos
				</Bookmark>
			</BookmarkBar>

			<AppBar>
				<Logo>m</Logo>
				<LockSlot><FaLock size={15} /></LockSlot>
				<Project>
					pagina de empresa
					<ProjectSub>Index cel</ProjectSub>
				</Project>
				<Tool $w={60}><ToolIcon><DiagramIcon /></ToolIcon><ToolLabel>Diagram</ToolLabel></Tool>
				<Caret $w={18} $mr={6} />
				<Tool $w={60}><ToolIcon><NoteIcon /></ToolIcon><ToolLabel>Note</ToolLabel></Tool>
				<Caret $w={22} />
				<ToolDivider $mx={19} />
				<Tool $w={64}><ToolIcon><ComponentsIcon /></ToolIcon><ToolLabel>Components</ToolLabel></Tool>
				<Tool $w={60}><ToolIcon><ArrangeIcon /></ToolIcon><ToolLabel>Arrange</ToolLabel></Tool>
				<ToolDivider $mx={16} />
				<Tool $w={60}><ToolIcon><ExportIcon /></ToolIcon><ToolLabel>Export</ToolLabel></Tool>
				<Tool $w={58}><ToolIcon><FaUserPlus size={21} /></ToolIcon><ToolLabel>Sharing</ToolLabel></Tool>
				<UpgradeNow>Upgrade now</UpgradeNow>
				<Tool $w={58} $ml={72}><ToolIcon><FormatIcon /></ToolIcon><ToolLabel $blue>Format</ToolLabel></Tool>
				<Tool $w={59}><ToolIcon><BsLightningChargeFill size={23} /></ToolIcon><ToolLabel>Interactions</ToolLabel></Tool>
				<Tool $w={59}><ToolIcon><CodeXml size={24} /></ToolIcon><ToolLabel>Handoff</ToolLabel></Tool>
				<Tool $w={58}><ToolIcon><BsPlayCircleFill size={20} /></ToolIcon><ToolLabel>Preview</ToolLabel></Tool>
			</AppBar>

			<Workspace>
				<Rail>
					<AddButton><Plus size={16} strokeWidth={3} /></AddButton>
					<RailItem><RailIcon><StencilsIcon /></RailIcon>Stencils</RailItem>
					<RailItem $active><RailIcon><PagesIcon /></RailIcon>Pages</RailItem>
					<RailItem><RailIcon><BsStack size={22} /></RailIcon>Outline</RailItem>
					<RailItem><RailIcon><TemplatesIcon /></RailIcon>Templates</RailItem>
					<RailItem><RailIcon><ImagesIcon /></RailIcon>Images</RailItem>
					<RailItem><RailIcon><BsSuitClubFill size={23} /></RailIcon>Icons</RailItem>
					<RailItem><RailIcon><CommentsIcon /></RailIcon>Comments</RailItem>
					<RailBottom>
						<FaCog size={20} />
						<FaQuestionCircle size={22} />
						<Avatar>
							<svg width="30" height="30" viewBox="0 0 30 30" fill="#fff">
								<circle cx="15" cy="11" r="6" />
								<ellipse cx="15" cy="27" rx="11" ry="8" />
							</svg>
						</Avatar>
					</RailBottom>
				</Rail>

				<PagesPanel>
					<SearchRow>
						<SearchBox><Search size={13} strokeWidth={2.5} />Search pages</SearchBox>
						<FilterIcon viewBox="0 0 14 12" fill="none" stroke="#3a8df5" strokeWidth="2">
							<path d="M0 1.500h14M2.500 6h9M5 10.500h4" />
						</FilterIcon>
					</SearchRow>
					<ActionRow>
						<NewPageIcon />New Page
						<ActionIcons>
							<FolderPlus size={17} strokeWidth={1.6} />
							<Trash2 size={16} strokeWidth={1.8} />
							<Copy size={16} strokeWidth={1.8} />
							<EllipsisVertical size={16} strokeWidth={2.4} />
						</ActionIcons>
					</ActionRow>
					<AllPages>ALL PAGES</AllPages>
					{PAGES.map((name, i) => (
						<PageRow key={name} $odd={i % 2 === 0} $selected={name === 'Index cel'}>
							<DocIcon />{name}
						</PageRow>
					))}
					<PlanBox>
						Free plan: 108/400 objects
						<PlanRow>
							<PlanTrack><PlanFill style={{ width: `${(108 / 400) * 100}%` }} /></PlanTrack>
							<UpgradeSmall>Upgrade</UpgradeSmall>
						</PlanRow>
					</PlanBox>
				</PagesPanel>

				<CanvasArea>
					<RulerCorner />
					<TopRuler><HorizontalRuler /></TopRuler>
					<SideRuler><VerticalRuler /></SideRuler>
					<Stage>
						<Artboard>
							<Phone>
								<PhoneButton $side="left" $top={149} $h={37} />
								<PhoneButton $side="left" $top={194} $h={35} />
								<PhoneButton $side="right" $top={171} $h={36} />
								<Notch />
								<Screen>
									<PhoneNav>
										<PhoneAvatar viewBox="0 0 35 35">
											<circle cx="17.5" cy="17.5" r="17" fill="#fff" stroke="#555" />
											<circle cx="17.5" cy="13" r="7.5" fill="#444" />
											<path d="M4 28c3-6 8-7 13.500-7S28 22 31 28a17 17 0 0 1-27 0z" fill="#444" />
										</PhoneAvatar>
										<NavLabel>Label</NavLabel>
										<NavLabel>Label</NavLabel>
										<NavLabel>Label</NavLabel>
									</PhoneNav>
									<Heading>Heading</Heading>
									<Lorem>
										{LOREM.map(([dy, words], i) => (
											<LoremRow key={i} style={{ marginTop: dy ? dy - 4 : 0 }}>
												{words.map((w, j) => (
													<LoremWord key={j} style={{ width: w }} />
												))}
											</LoremRow>
										))}
										<LoremRow $thin style={{ marginTop: 7 }}>
											{LOREM_CLIPPED.map((w, j) => (
												<LoremWord key={j} style={{ width: w }} />
											))}
										</LoremRow>
									</Lorem>
									<PhoneFooter />
								</Screen>
							</Phone>
						</Artboard>
						<ZoomDock>
							<DockBox>
								<DockSlot $w={29}><Minus size={13} strokeWidth={2.5} /></DockSlot>
								<DockSlot $w={44}>65.4%</DockSlot>
								<DockSlot $w={26}><Plus size={13} strokeWidth={2.5} /></DockSlot>
								<DockSlot $w={33} $line><FitIcon /></DockSlot>
							</DockBox>
							<DockBox>
								<DockSlot $w={29}><Undo2 size={16} strokeWidth={2} /></DockSlot>
								<DockSlot $w={31} $dim><Redo2 size={16} strokeWidth={2} /></DockSlot>
							</DockBox>
						</ZoomDock>
					</Stage>
					<ScrollV>
						<ArrowV />
						<ThumbV />
						<ArrowV $down />
					</ScrollV>
					<ScrollH>
						<ArrowH />
						<ThumbH />
						<ArrowH $right />
					</ScrollH>
				</CanvasArea>

				<RightPanel>
					<Section $h={229} $pt={8}>
						<SectionTitle>Page Settings</SectionTitle>
						<Field $h={35}>
							<CustomIcon viewBox="0 0 12 15" fill="none" stroke="#8d949e" strokeWidth="1.2">
								<path d="M2 .7h5l4.300 4.300v7.500a1.800 1.800 0 0 1-1.800 1.800H2A1.300 1.300 0 0 1 .7 13V2A1.300 1.300 0 0 1 2 .7z" />
								<path d="M3.500 10.500l1.500-1.500M8.500 7L7 8.500" />
							</CustomIcon>
							Custom
							<Dropper />
						</Field>
						<FieldRow $mt={8}>
							<FieldStack>
								<Field $w={87}><MoveHorizontal size={13} color="#8d949e" /><SizeValue>1000</SizeValue></Field>
								<Field $w={87}><MoveVertical size={13} color="#8d949e" /><SizeValue>1000</SizeValue></Field>
							</FieldStack>
							<Linker viewBox="0 0 47 58" fill="none" stroke="#c6cad1" strokeWidth="1">
								<path d="M0 12.500h11a3 3 0 0 1 3 3v3M0 45.500h11a3 3 0 0 0 3-3v-2" />
								<path d="M11 24v-3a3 3 0 0 1 6 0" stroke="#9aa0a9" strokeWidth="1.4" />
								<rect x="8.7" y="24.7" width="10.6" height="8.6" rx="1.5" stroke="#9aa0a9" strokeWidth="1.4" />
							</Linker>
							<FieldStack>
								<Segments>
									<Segment><Orient $w={10} $h={16} /></Segment>
									<Segment $line><Orient $w={15} $h={9} /></Segment>
								</Segments>
								<Field $w={88} $tight>
									<FaFillDrip size={13} color="#8d949e" />
									<InnerField $w={60} />
								</Field>
							</FieldStack>
						</FieldRow>
						<TextLink $mt={10}>Fit page to content...</TextLink>
						<TextLink $mt={13}>Reset page view</TextLink>
						<CheckLine><Box />Hide content outside page</CheckLine>
					</Section>
					<Section $h={132} $pt={9}>
						<SectionTitle>Default Text Settings</SectionTitle>
						<FieldRow $mt={0}>
							<Field $w={138} $muted>
								Font family
								<Dropper $sep><DropLine /></Dropper>
							</Field>
							<Field $w={78}>
								<NoneText>None</NoneText>
								<Dropper $sep><DropLine /></Dropper>
							</Field>
						</FieldRow>
						<FieldRow>
							<Field $w={108}>
								<ColorA>A</ColorA>
								<InnerField $w={79} $grey>?</InnerField>
							</Field>
							<Field $w={108}>
								<SizeSmall>T</SizeSmall><SizeBig>T</SizeBig>
								<Dropper $sep><UnitPx>PX</UnitPx><DropLine /></Dropper>
							</Field>
						</FieldRow>
						<TextLink $mt={8}>Reset defaults</TextLink>
					</Section>
					<Section $pt={9}>
						<SectionTitle>Replace Colors</SectionTitle>
						<SwitchTabs>
							<SwitchTab $on>Current Page</SwitchTab>
							<SwitchTab>Entire Project</SwitchTab>
						</SwitchTabs>
						<ChecksRow>
							<CheckItem $w={63}><Box $on><Check size={11} strokeWidth={4} /></Box>Fills</CheckItem>
							<CheckItem $w={83}><Box $on><Check size={11} strokeWidth={4} /></Box>Strokes</CheckItem>
							<CheckItem $w={76}><Box $on><Check size={11} strokeWidth={4} /></Box>Text Color</CheckItem>
						</ChecksRow>
						<Swatches>
							{['#f5f5f5', '#ffffff', '#a6a6a6', '#464646', '#222222', '#000000'].map((c) => (
								<Swatch key={c} $color={c} />
							))}
						</Swatches>
						<InfoBox>Click on any color above to replace it on the current page</InfoBox>
					</Section>
				</RightPanel>
			</Workspace>
		</Page>
	)
}
